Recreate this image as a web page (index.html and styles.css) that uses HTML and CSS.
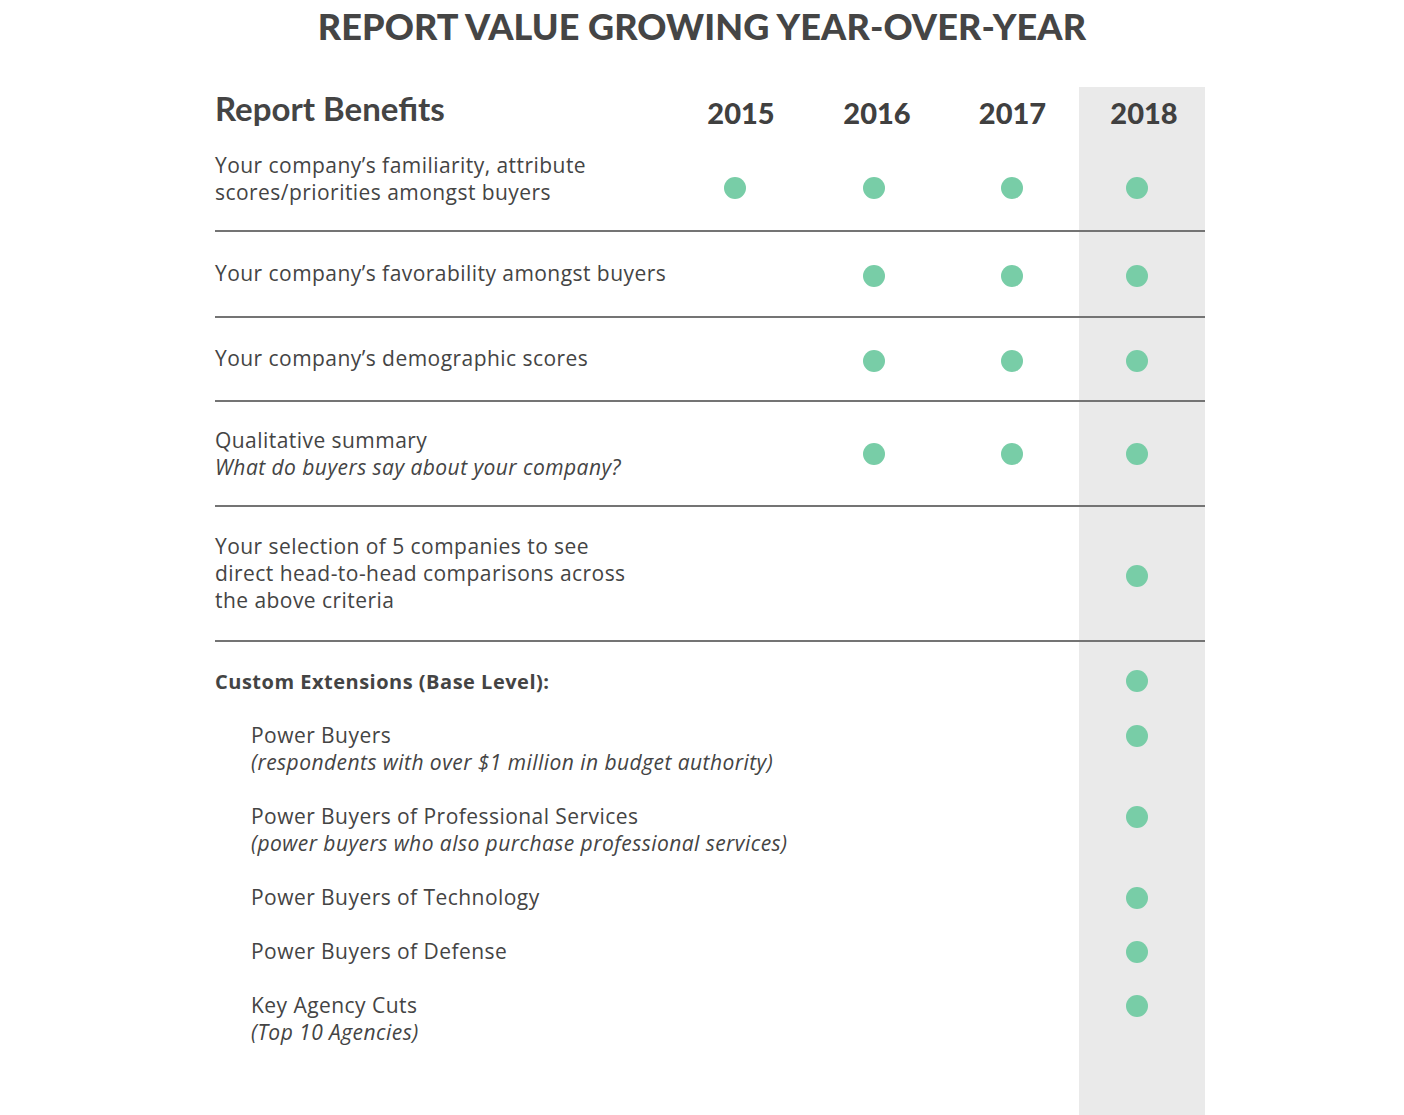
FILE: index.html
```html
<!DOCTYPE html>
<html lang="en">
<head>
<meta charset="utf-8">
<title>Report Value Growing Year-over-Year</title>
<link rel="stylesheet" href="styles.css">
</head>
<body>
<main class="page">
  <h1 class="title">REPORT VALUE GROWING YEAR-OVER-YEAR</h1>
  <div class="table">
    <div class="row head">
      <div class="label heading">Report Benefits</div>
      <div class="year y15">2015</div>
      <div class="year y16">2016</div>
      <div class="year y17">2017</div>
      <div class="year y18 hl">2018</div>
    </div>

    <div class="row ruled r1">
      <div class="label">Your company’s familiarity, attribute<br>scores/priorities amongst buyers</div>
      <div class="cell"><span class="dot"></span></div>
      <div class="cell"><span class="dot"></span></div>
      <div class="cell"><span class="dot"></span></div>
      <div class="cell hl last"><span class="dot"></span></div>
    </div>

    <div class="row ruled r2">
      <div class="label">Your company’s favorability amongst buyers</div>
      <div class="cell"></div>
      <div class="cell"><span class="dot"></span></div>
      <div class="cell"><span class="dot"></span></div>
      <div class="cell hl last"><span class="dot"></span></div>
    </div>

    <div class="row ruled r3">
      <div class="label">Your company’s demographic scores</div>
      <div class="cell"></div>
      <div class="cell"><span class="dot"></span></div>
      <div class="cell"><span class="dot"></span></div>
      <div class="cell hl last"><span class="dot"></span></div>
    </div>

    <div class="row ruled r4">
      <div class="label">Qualitative summary<br><em>What do buyers say about your company?</em></div>
      <div class="cell"></div>
      <div class="cell"><span class="dot"></span></div>
      <div class="cell"><span class="dot"></span></div>
      <div class="cell hl last"><span class="dot"></span></div>
    </div>

    <div class="row ruled r5">
      <div class="label">Your selection of 5 companies to see<br>direct head-to-head comparisons across<br>the above criteria</div>
      <div class="cell"></div>
      <div class="cell"></div>
      <div class="cell"></div>
      <div class="cell hl last"><span class="dot"></span></div>
    </div>

    <div class="row ext first">
      <div class="label strong">Custom Extensions (Base Level):</div>
      <div class="cell hl last"><span class="dot"></span></div>
    </div>

    <div class="row ext">
      <div class="label sub">Power Buyers<br><em>(respondents with over $1 million in budget authority)</em></div>
      <div class="cell hl last"><span class="dot"></span></div>
    </div>

    <div class="row ext">
      <div class="label sub">Power Buyers of Professional Services<br><em>(power buyers who also purchase professional services)</em></div>
      <div class="cell hl last"><span class="dot"></span></div>
    </div>

    <div class="row ext">
      <div class="label sub">Power Buyers of Technology</div>
      <div class="cell hl last"><span class="dot"></span></div>
    </div>

    <div class="row ext">
      <div class="label sub">Power Buyers of Defense</div>
      <div class="cell hl last"><span class="dot"></span></div>
    </div>

    <div class="row ext end">
      <div class="label sub">Key Agency Cuts<br><em>(Top 10 Agencies)</em></div>
      <div class="cell hl last"><span class="dot"></span></div>
    </div>
  </div>
</main>
</body>
</html>
```

FILE: styles.css
```css
* { box-sizing: border-box; }

html, body {
  margin: 0;
  padding: 0;
  background: #ffffff;
}

body {
  font-family: "Open Sans", Lato, "Liberation Sans", sans-serif;
  color: #444444;
  overflow: hidden;
}

.page {
  width: 1404px;
}

.title {
  margin: 0;
  padding-top: 4px;
  height: 87px;
  font-family: Lato, "Open Sans", sans-serif;
  font-size: 36px;
  line-height: 44px;
  font-weight: 900;
  text-align: center;
  color: #454545;
  letter-spacing: 0.1px;
}

.table {
  margin-left: 215px;
  width: 990px;
}

.row {
  display: grid;
  grid-template-columns: 451px 138px 140px 135px 126px;
  align-items: stretch;
}

.ruled {
  border-bottom: 2px solid #747474;
}

.label {
  font-size: 21px;
  line-height: 27px;
  letter-spacing: 0.45px;
  color: #444444;
  align-self: center;
  white-space: nowrap;
}

.label em {
  font-style: italic;
  font-weight: 400;
}

.cell {
  display: flex;
  align-items: center;
  justify-content: center;
}

.hl {
  background: #eaeaea;
}

.cell.last {
  padding-right: 10px;
}

.dot {
  display: block;
  width: 22px;
  height: 22px;
  border-radius: 50%;
  background: #78cda7;
}

/* header */
.head {
  height: 58px;
}

.heading {
  align-self: start;
  padding-top: 4px;
  font-family: Lato, "Open Sans", sans-serif;
  font-size: 33px;
  line-height: 34px;
  letter-spacing: 0;
  font-weight: 700;
  color: #444444;
}

.year {
  padding-top: 9px;
  font-family: Lato, "Open Sans", sans-serif;
  font-size: 29px;
  line-height: 34px;
  font-weight: 900;
  text-align: center;
  color: #404040;
}

.y15 { padding-left: 12px; }
.y16 { padding-left: 6px; }
.y17 { padding-left: 2px; }
.y18 { padding-left: 4px; }

/* benefit rows */
.r1 .label { padding: 6px 0 24px; }
.r1 { height: 87px; }
.r2 { height: 86px; }
.r3 { height: 84px; }
.r4 { height: 105px; }
.r5 { height: 135px; }

.r2 .dot,
.r3 .dot,
.r5 .dot {
  margin-top: 4px;
}

.r2 .label,
.r3 .label {
  margin-top: -2px;
}

/* extensions */
.ext .label {
  grid-column: 1 / span 4;
  align-self: start;
  padding-bottom: 27px;
}

.ext .cell {
  grid-column: 5;
  align-items: flex-start;
}

.ext .dot {
  margin-top: 3px;
}

.ext.first .label {
  padding-top: 26px;
}

.ext.first .dot {
  margin-top: 28px;
}

.strong {
  font-weight: 700;
  font-size: 20px;
  letter-spacing: 0.5px;
}

.sub {
  padding-left: 36px;
}

.ext.end .label {
  padding-bottom: 80px;
}
```
